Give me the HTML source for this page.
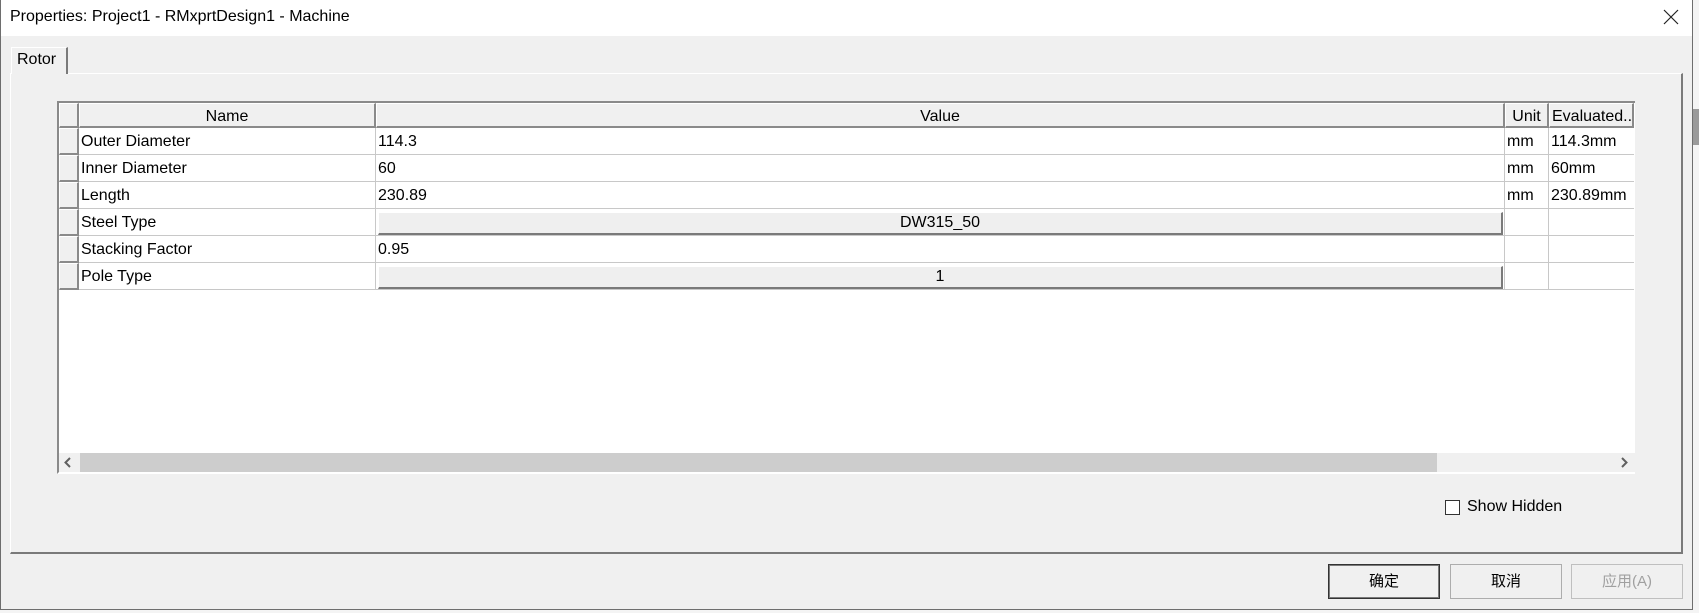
<!DOCTYPE html>
<html><head><meta charset="utf-8"><style>
*{box-sizing:border-box;margin:0;padding:0}
body{width:1699px;height:613px;background:#f4f4f4;position:relative;overflow:hidden;font-family:"Liberation Sans","Noto Sans CJK SC",sans-serif;font-size:16px;color:#000}
.a{position:absolute}
.win{left:0;top:0;width:1693px;height:610px;background:#f0f0f0;border:1px solid #6e6e6e;border-top:none}
.title{left:1px;top:0;width:1691px;height:36px;background:#fff}
.cell{position:absolute;border-right:1px solid #c8c8c8;border-bottom:1px solid #c8c8c8;background:#fff;white-space:nowrap;overflow:hidden;line-height:28px;padding-left:2px}
.hdr{position:absolute;background:#f0f0f0;border-right:2px solid #8a8a8a;border-bottom:2px solid #8a8a8a;border-left:1px solid #fff;border-top:1px solid #fff;text-align:center;line-height:25px;white-space:nowrap;overflow:hidden}
.rh{position:absolute;background:#f0f0f0;border-right:2px solid #8a8a8a;border-bottom:2px solid #8a8a8a;border-left:1px solid #fff;border-top:1px solid #fff}
.btn{position:absolute;background:#efefef;border:1px solid #fff;border-right:2px solid #7a7a7a;border-bottom:2px solid #7a7a7a;text-align:center;line-height:20px}
.pb{position:absolute;background:#f0f0f0;border:1px solid #adadad;text-align:center;line-height:33px;font-size:15px}
</style></head><body>
<div class="a" style="left:1693px;top:109px;width:6px;height:36px;background:#9a9a9a"></div>
<div class="a win"></div>
<div class="a title"></div>
<div class="a" style="left:10px;top:8px;font-size:16px">Properties: Project1 - RMxprtDesign1 - Machine</div>
<svg class="a" style="left:1663px;top:9px" width="16" height="16"><path d="M1 1L15 15M15 1L1 15" stroke="#222" stroke-width="1.2"/></svg>
<div class="a" style="left:10px;top:73px;width:1673px;height:481px;border-top:1px solid #fff;border-left:1px solid #fff;border-right:2px solid #7a7a7a;border-bottom:2px solid #7a7a7a"></div>
<div class="a" style="left:11px;top:47px;width:57px;height:27px;background:#f0f0f0;border-top:1px solid #fff;border-left:1px solid #fff;border-right:2px solid #7a7a7a"></div>
<div class="a" style="left:17px;top:51px">Rotor</div>
<div class="a" style="left:57px;top:101px;width:1578px;height:373px;background:#fff;border-left:2px solid #8a8a8a;border-top:2px solid #8a8a8a;border-bottom:2px solid #fff"></div>
<div class="rh" style="left:59px;top:103px;width:20px;height:25px"></div>
<div class="hdr" style="left:79px;top:103px;width:297px;height:25px">Name</div>
<div class="hdr" style="left:376px;top:103px;width:1129px;height:25px">Value</div>
<div class="hdr" style="left:1505px;top:103px;width:44px;height:25px">Unit</div>
<div class="hdr" style="left:1549px;top:103px;width:85px;height:25px;text-align:left;padding-left:2px">Evaluated...</div>

<div class="rh" style="left:59px;top:128px;width:20px;height:27px"></div>
<div class="cell" style="left:79px;top:128px;width:297px;height:27px">Outer Diameter</div>
<div class="cell" style="left:376px;top:128px;width:1129px;height:27px">114.3</div>
<div class="cell" style="left:1505px;top:128px;width:44px;height:27px">mm</div>
<div class="cell" style="left:1549px;top:128px;width:85px;height:27px;border-right:none">114.3mm</div>

<div class="rh" style="left:59px;top:155px;width:20px;height:27px"></div>
<div class="cell" style="left:79px;top:155px;width:297px;height:27px">Inner Diameter</div>
<div class="cell" style="left:376px;top:155px;width:1129px;height:27px">60</div>
<div class="cell" style="left:1505px;top:155px;width:44px;height:27px">mm</div>
<div class="cell" style="left:1549px;top:155px;width:85px;height:27px;border-right:none">60mm</div>

<div class="rh" style="left:59px;top:182px;width:20px;height:27px"></div>
<div class="cell" style="left:79px;top:182px;width:297px;height:27px">Length</div>
<div class="cell" style="left:376px;top:182px;width:1129px;height:27px">230.89</div>
<div class="cell" style="left:1505px;top:182px;width:44px;height:27px">mm</div>
<div class="cell" style="left:1549px;top:182px;width:85px;height:27px;border-right:none">230.89mm</div>

<div class="rh" style="left:59px;top:209px;width:20px;height:27px"></div>
<div class="cell" style="left:79px;top:209px;width:297px;height:27px">Steel Type</div>
<div class="cell" style="left:376px;top:209px;width:1129px;height:27px"></div>
<div class="btn" style="left:378px;top:212px;width:1125px;height:23px">DW315_50</div>
<div class="cell" style="left:1505px;top:209px;width:44px;height:27px"></div>
<div class="cell" style="left:1549px;top:209px;width:85px;height:27px;border-right:none"></div>

<div class="rh" style="left:59px;top:236px;width:20px;height:27px"></div>
<div class="cell" style="left:79px;top:236px;width:297px;height:27px">Stacking Factor</div>
<div class="cell" style="left:376px;top:236px;width:1129px;height:27px">0.95</div>
<div class="cell" style="left:1505px;top:236px;width:44px;height:27px"></div>
<div class="cell" style="left:1549px;top:236px;width:85px;height:27px;border-right:none"></div>

<div class="rh" style="left:59px;top:263px;width:20px;height:27px"></div>
<div class="cell" style="left:79px;top:263px;width:297px;height:27px">Pole Type</div>
<div class="cell" style="left:376px;top:263px;width:1129px;height:27px"></div>
<div class="btn" style="left:378px;top:266px;width:1125px;height:23px">1</div>
<div class="cell" style="left:1505px;top:263px;width:44px;height:27px"></div>
<div class="cell" style="left:1549px;top:263px;width:85px;height:27px;border-right:none"></div>
<div class="a" style="left:59px;top:453px;width:1576px;height:19px;background:#f0f0f0"></div>
<div class="a" style="left:80px;top:453px;width:1357px;height:19px;background:#cdcdcd"></div>
<svg class="a" style="left:63px;top:457px" width="10" height="11"><path d="M7 1L2.5 5.5L7 10" stroke="#606060" stroke-width="2" fill="none"/></svg>
<svg class="a" style="left:1619px;top:457px" width="10" height="11"><path d="M3 1L7.5 5.5L3 10" stroke="#606060" stroke-width="2" fill="none"/></svg>
<div class="a" style="left:1445px;top:500px;width:15px;height:15px;background:#fff;border:1px solid #333"></div>
<div class="a" style="left:1467px;top:498px">Show Hidden</div>
<div class="pb" style="left:1328px;top:564px;width:112px;height:35px;border:1px solid #333;box-shadow:inset 0 0 0 1px #7a7a7a">确定</div>
<div class="pb" style="left:1450px;top:564px;width:112px;height:35px">取消</div>
<div class="pb" style="left:1571px;top:564px;width:112px;height:35px;color:#a0a0a0;border-color:#bfbfbf">应用(A)</div>
</body></html>
